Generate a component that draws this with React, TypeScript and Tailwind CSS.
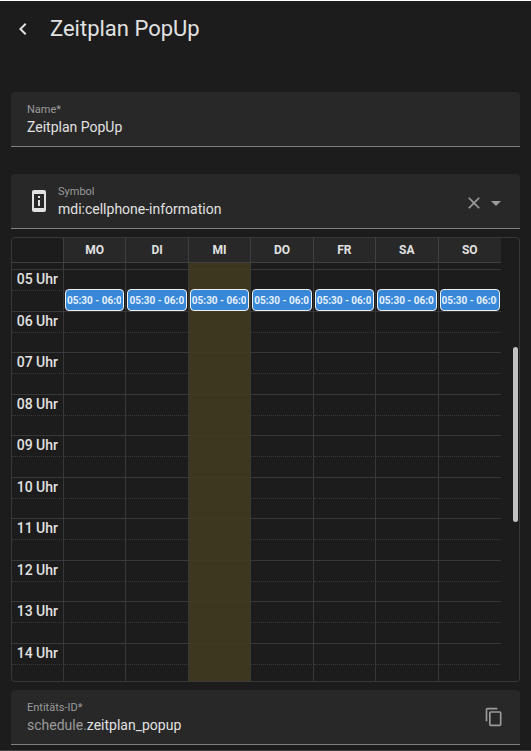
import { useState, type ReactNode } from "react";

const ICONS = {
  back: "M15.41,16.58L10.83,12L15.41,7.41L14,6L8,12L14,18L15.41,16.58Z",
  copy: "M19,21H8V7H19M19,5H8A2,2 0 0,0 6,7V21A2,2 0 0,0 8,23H19A2,2 0 0,0 21,21V7A2,2 0 0,0 19,5M16,1H4A2,2 0 0,0 2,3V17H4V3H16V1Z",
  close:
    "M19,6.41L17.59,5L12,10.59L6.41,5L5,6.41L10.59,12L5,17.59L6.41,19L12,13.41L17.59,19L19,17.59L13.41,12L19,6.41Z",
  menuDown: "M7,10L12,15L17,10H7Z",
  phoneInfo:
    "M17,19V5H7V19H17M17,1A2,2 0 0,1 19,3V21A2,2 0 0,1 17,23H7C5.89,23 5,22.1 5,21V3C5,1.89 5.89,1 7,1H17M11,7H13V9H11V7M11,11H13V17H11V11Z",
};

const DAYS = ["MO", "DI", "MI", "DO", "FR", "SA", "SO"];
const TODAY = 2;
const HOURS = [5, 6, 7, 8, 9, 10, 11, 12, 13, 14];

function Icon({ path, className }: { path: string; className: string }) {
  return (
    <svg viewBox="0 0 24 24" fill="currentColor" aria-hidden="true" className={className}>
      <path d={path} />
    </svg>
  );
}

function Field({
  id,
  label,
  value,
  prefix,
  leading,
  trailing,
}: {
  id: string;
  label: string;
  value: string;
  prefix?: string;
  leading?: ReactNode;
  trailing?: ReactNode;
}) {
  const [text, setText] = useState(value);
  return (
    <div className="flex h-[55px] items-center gap-[7px] rounded-t border-b border-[#808080] bg-[#282828] px-4">
      {leading}
      <div className="flex min-w-0 flex-1 flex-col">
        <label htmlFor={id} className="text-[11px] leading-4 text-[#9b9b9b]">
          {label}
        </label>
        <div className="flex h-[18px] items-center text-[14px] leading-[18px]">
          {prefix && <span className="text-[#9b9b9b]">{prefix}</span>}
          <input
            id={id}
            value={text}
            onChange={(e) => setText(e.target.value)}
            className="min-w-0 flex-1 bg-transparent text-[#e1e1e1] outline-none"
          />
        </div>
      </div>
      {trailing}
    </div>
  );
}

function SlotCells({ hasEvent = false }: { hasEvent?: boolean }) {
  return DAYS.map((day, i) => (
    <td
      key={day}
      className={`relative border-[#383838] p-0 ${i < DAYS.length - 1 ? "border-r" : ""} ${
        i === TODAY ? "border-t-[#423b24] bg-[#3d3720]" : ""
      }`}
    >
      {hasEvent && (
        <button
          type="button"
          className="absolute -top-[2px] right-px left-px flex h-[22px] items-center overflow-hidden rounded border border-[#f0f0f0] bg-[#3788d8] pt-[2px] pr-[2px] pl-px text-left"
        >
          <span className="overflow-hidden text-[10px] leading-3 font-bold whitespace-nowrap text-[#e8f0fa]">
            05:30 - 06:00
          </span>
        </button>
      )}
    </td>
  ));
}

function Schedule() {
  return (
    <div className="relative overflow-hidden rounded border border-[#383838] pr-[18px]">
      <table className="w-full table-fixed border-separate border-spacing-0">
        <thead>
          <tr className="h-[25px]">
            <td className="w-[52px] border-r border-b border-[#404040] p-0" />
            {DAYS.map((day, i) => (
              <th
                key={day}
                scope="col"
                className={`border-b border-[#404040] bg-[#282828] p-0 text-[12px] leading-4 font-bold text-[#e1e1e1] ${
                  i < DAYS.length - 1 ? "border-r" : ""
                }`}
              >
                {day}
              </th>
            ))}
          </tr>
        </thead>
        <tbody>
          <tr className="h-[6px]">
            <td className="border-r border-[#404040] p-0" />
            <SlotCells />
          </tr>
        </tbody>
        {HOURS.map((hour, i) => (
          <tbody key={hour}>
            <tr className="h-[21px] [&>*]:border-t">
              <th
                scope="row"
                className="border-r border-[#383838] p-0 pr-[5px] text-right align-top text-[14px] leading-[18px] font-medium whitespace-nowrap text-[#e1e1e1]"
              >
                {String(hour).padStart(2, "0")} Uhr
              </th>
              <SlotCells />
            </tr>
            <tr
              className={`[&>*]:border-t [&>*]:[border-top-style:dotted] ${
                i === HOURS.length - 1 ? "h-[17px]" : i % 2 === 0 ? "h-[21px]" : "h-[20px]"
              }`}
            >
              <td className="border-r border-[#383838] p-0" />
              <SlotCells hasEvent={hour === 5} />
            </tr>
          </tbody>
        ))}
      </table>
      <div className="absolute top-[109px] right-px h-[175px] w-[5px] rounded-full bg-[#c1c1c1]" />
    </div>
  );
}

export default function App() {
  return (
    <main className="min-h-screen border-t border-b border-t-white border-b-[#404040] bg-[#1c1c1c] px-[11px] pb-1 font-[Roboto,sans-serif] text-[#e1e1e1]">
      <header className="flex h-[55px] items-center gap-[15px]">
        <button type="button" aria-label="Zurück">
          <Icon path={ICONS.back} className="size-6" />
        </button>
        <h1 className="text-[22px] leading-7">Zeitplan PopUp</h1>
      </header>
      <form className="flex flex-col pt-9">
        <Field id="name" label="Name*" value="Zeitplan PopUp" />
        <div className="pt-[27px] pb-2">
          <Field
            id="symbol"
            label="Symbol"
            value="mdi:cellphone-information"
            leading={<Icon path={ICONS.phoneInfo} className="size-6 text-[#e1e1e1]" />}
            trailing={
              <div className="-mr-1 flex items-center pt-1 text-[#9b9b9b]">
                <button type="button" aria-label="Löschen">
                  <Icon path={ICONS.close} className="size-5" />
                </button>
                <button type="button" aria-label="Öffnen">
                  <Icon path={ICONS.menuDown} className="size-6" />
                </button>
              </div>
            }
          />
        </div>
        <Schedule />
        <div className="pt-2">
          <Field
            id="entity-id"
            label="Entitäts-ID*"
            prefix="schedule."
            value="zeitplan_popup"
            trailing={
              <button type="button" aria-label="Kopieren" className="text-[#9b9b9b]">
                <Icon path={ICONS.copy} className="size-5" />
              </button>
            }
          />
        </div>
      </form>
    </main>
  );
}
